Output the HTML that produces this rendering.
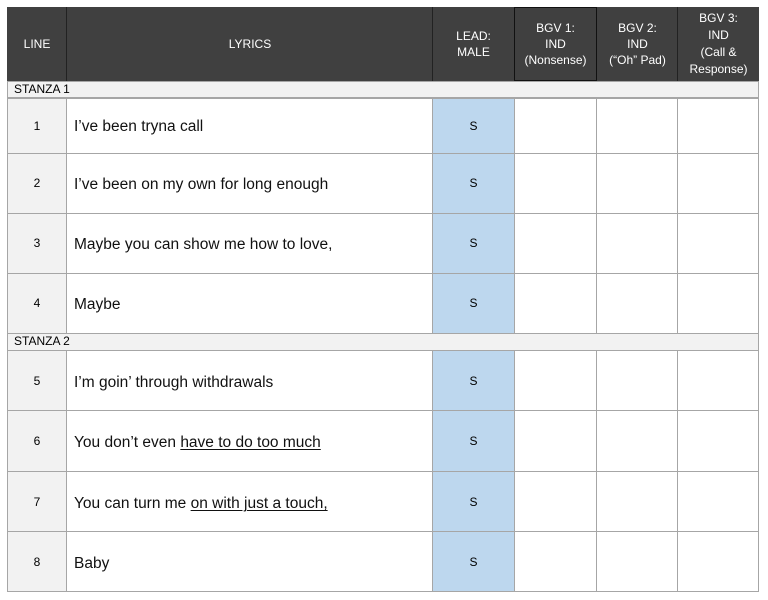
<!DOCTYPE html><html><head><style>
body{margin:0;width:768px;height:600px;background:#fff;position:relative;font-family:"Liberation Sans",sans-serif;overflow:hidden}
div{position:absolute;box-sizing:border-box}
.h{background:#404040;color:#fff;font-size:12px;text-align:center;display:flex;align-items:center;justify-content:center;line-height:16px}
.vl{width:1px;background:#a6a6a6}
.hl{height:1px;background:#a6a6a6;left:7px;width:752px}
.t{font-size:15.5px;color:#111;white-space:nowrap}
.t2{font-size:15.5px;color:#111;white-space:nowrap}
.n{font-size:12px;width:60px;left:7px;text-align:center}
.s{font-size:12px;left:433px;width:81px;text-align:center}
u{text-decoration-thickness:1px;text-underline-offset:2px}
</style></head><body>
<div style="left:7px;top:7px;width:752px;height:74px;background:#404040"></div>
<div class="h" style="left:7px;top:7px;width:60px;height:74px">LINE</div>
<div class="h" style="left:67px;top:7px;width:366px;height:74px">LYRICS</div>
<div class="h" style="left:433px;top:7px;width:81px;height:74px">LEAD:<br>MALE</div>
<div class="h" style="left:514px;top:7px;width:83px;height:74px;border:1px solid #111">BGV 1:<br>IND<br>(Nonsense)</div>
<div class="h" style="left:597px;top:7px;width:81px;height:74px">BGV 2:<br>IND<br>(“Oh” Pad)</div>
<div class="h" style="left:678px;top:7px;width:81px;height:74px;line-height:17px">BGV 3:<br>IND<br>(Call &amp;<br>Response)</div>
<div style="left:66px;top:7px;width:1px;height:74px;background:#222"></div>
<div style="left:432px;top:7px;width:1px;height:74px;background:#222"></div>
<div style="left:677px;top:7px;width:1px;height:74px;background:#222"></div>
<div style="left:7px;top:81px;width:752px;height:17px;background:#f2f2f2"></div>
<div style="left:7px;top:333px;width:752px;height:17px;background:#f2f2f2"></div>
<div style="left:7px;top:98px;width:60px;height:235px;background:#f2f2f2"></div>
<div style="left:7px;top:350px;width:60px;height:241px;background:#f2f2f2"></div>
<div style="left:433px;top:98px;width:81px;height:235px;background:#bdd7ee"></div>
<div style="left:433px;top:350px;width:81px;height:241px;background:#bdd7ee"></div>
<div class="vl" style="left:7px;top:81px;height:510px"></div>
<div class="vl" style="left:758px;top:81px;height:510px"></div>
<div class="vl" style="left:66px;top:98px;height:235px"></div><div class="vl" style="left:66px;top:350px;height:241px"></div>
<div class="vl" style="left:432px;top:98px;height:235px"></div><div class="vl" style="left:432px;top:350px;height:241px"></div>
<div class="vl" style="left:514px;top:98px;height:235px"></div><div class="vl" style="left:514px;top:350px;height:241px"></div>
<div class="vl" style="left:596px;top:98px;height:235px"></div><div class="vl" style="left:596px;top:350px;height:241px"></div>
<div class="vl" style="left:677px;top:98px;height:235px"></div><div class="vl" style="left:677px;top:350px;height:241px"></div>
<div class="hl" style="top:81px"></div><div class="hl" style="top:97px;height:2px"></div>
<div class="hl" style="top:153px"></div><div class="hl" style="top:213px"></div><div class="hl" style="top:273px"></div>
<div class="hl" style="top:333px"></div><div class="hl" style="top:350px"></div>
<div class="hl" style="top:410px"></div><div class="hl" style="top:471px"></div><div class="hl" style="top:531px"></div><div class="hl" style="top:591px"></div>
<div style="left:14px;top:82px;font-size:12px">STANZA 1</div>
<div style="left:14px;top:334px;font-size:12px">STANZA 2</div>
<div class="n" style="top:119px">1</div><div class="n" style="top:176px">2</div><div class="n" style="top:236px">3</div><div class="n" style="top:296px">4</div>
<div class="n" style="top:374px">5</div><div class="n" style="top:434px">6</div><div class="n" style="top:495px">7</div><div class="n" style="top:555px">8</div>
<div class="s" style="top:119px">S</div><div class="s" style="top:176px">S</div><div class="s" style="top:236px">S</div><div class="s" style="top:296px">S</div>
<div class="s" style="top:374px">S</div><div class="s" style="top:434px">S</div><div class="s" style="top:495px">S</div><div class="s" style="top:555px">S</div>
<div class="t" style="left:74px;top:118px">I’ve been tryna call</div>
<div class="t" style="left:74px;top:176px">I’ve been on my own for long enough</div>
<div class="t" style="left:74px;top:236px">Maybe you can show me how to love,</div>
<div class="t" style="left:74px;top:296px">Maybe</div>
<div class="t2" style="left:74px;top:374px">I’m goin’ through withdrawals</div>
<div class="t2" style="left:74px;top:434px">You don’t even <u>have to do too much</u></div>
<div class="t2" style="left:74px;top:495px">You can turn me <u>on with just a touch,</u></div>
<div class="t2" style="left:74px;top:555px">Baby</div>
</body></html>
